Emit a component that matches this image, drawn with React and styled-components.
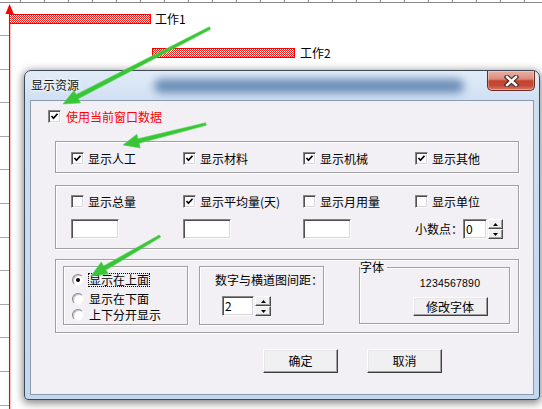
import React from 'react';
import styled, { createGlobalStyle } from 'styled-components';

const FONT = `"Noto Sans CJK SC", "Noto Sans", sans-serif`;

const GlobalStyle = createGlobalStyle`
  html, body { margin: 0; padding: 0; background: #fff; }
  body { font-family: ${FONT}; font-size: 12px; }
  * { box-sizing: border-box; }
`;

const Desktop = styled.div`
  position: relative;
  width: 542px;
  height: 409px;
  overflow: hidden;
  background: #fff;
  font-family: ${FONT};
  font-size: 12px;
  color: #000;
`;

const ChartLayer = styled.svg`
  position: absolute;
  left: 0;
  top: 0;
`;

const OverlayLayer = styled.svg`
  position: absolute;
  left: 0;
  top: 0;
  pointer-events: none;
  z-index: 5;
`;

const Window = styled.div`
  position: absolute;
  left: 24px;
  top: 70px;
  width: 516px;
  height: 330px;
  display: flex;
  flex-direction: column;
  padding: 0 5px 4px 5px;
  border: 1px solid #3e4856;
  border-radius: 7px 7px 4px 4px;
  background: linear-gradient(180deg, #e2ecf8 0px, #cfdff2 30px, #c3d7ee 100%);
  box-shadow: 0 2px 9px 1px rgba(0, 0, 0, 0.5);
`;

const TitleBar = styled.div`
  position: relative;
  height: 29px;
  flex: none;
  display: flex;
  align-items: flex-start;
  justify-content: space-between;

  &::before {
    content: '';
    position: absolute;
    left: 124px;
    right: 70px;
    top: 8px;
    height: 14px;
    border-radius: 7px;
    background: #5e83b0;
    filter: blur(4px);
    opacity: 0.9;
  }
`;

const Title = styled.div`
  position: relative;
  margin: 7px 0 0 1px;
  line-height: 14px;
  font-size: 12px;
  color: #101010;
  text-shadow: 0 0 5px #fff, 0 0 3px #fff;
`;

const CloseButton = styled.div`
  position: relative;
  width: 48px;
  height: 20px;
  margin-right: -1px;
  display: flex;
  align-items: center;
  justify-content: center;
  border: 1px solid #6b2a22;
  border-top: none;
  border-radius: 0 0 5px 5px;
  background: linear-gradient(180deg, #e9b0a6 0%, #dc8d7e 42%, #c3432f 52%, #c54a36 78%, #d9806c 100%);
  box-shadow: inset 0 0 0 1px rgba(255, 255, 255, 0.3);
`;

const Client = styled.div`
  flex: 1;
  display: flex;
  flex-direction: column;
  border: 1px solid #8a9bb0;
  background: #f2f0f4;
`;

const CheckItem = styled.div`
  display: flex;
  align-items: center;
  gap: ${p => p.$gap || 4}px;
  height: 13px;
  line-height: 13px;
  white-space: nowrap;
  color: ${p => (p.$red ? '#ff0000' : '#000')};
`;

const TopRow = styled.div`
  margin: 9px 0 0 17px;
`;

const Box = styled.span`
  width: 13px;
  height: 13px;
  flex: none;
  display: flex;
  align-items: center;
  justify-content: center;
  background: #fff;
  border: 1px solid;
  border-color: #858585 #fbfbfb #fbfbfb #858585;
  box-shadow: inset 1px 1px 0 #505050, inset -1px -1px 0 #d8d6da;
`;

const Group = styled.div`
  width: 464px;
  height: ${p => p.$h}px;
  margin: ${p => p.$mt}px 0 0 24px;
  border: 1px solid #a0a0a0;
  box-shadow: 1px 1px 0 #fff, inset 1px 1px 0 #fff;
  flex: none;
`;

const OptionGrid = styled.div`
  display: grid;
  grid-template-columns: 112px 120px 112px auto;
  row-gap: 11px;
  align-items: center;
  padding: ${p => p.$pt}px 0 0 15px;
`;

const Field = styled.div`
  width: ${p => p.$w}px;
  height: 20px;
  padding-left: 2px;
  line-height: 17px;
  font-size: 12px;
  background: #fff;
  border: 1px solid;
  border-color: #858585 #fbfbfb #fbfbfb #858585;
  box-shadow: inset 1px 1px 0 #505050, inset -1px -1px 0 #d8d6da;
`;

const SpinGroup = styled.div`
  display: flex;
  align-items: center;
`;

const SpinStack = styled.div`
  display: flex;
  flex-direction: column;
  width: ${p => p.$w}px;
  height: 20px;
  margin-left: 1px;
`;

const SpinBtn = styled.div`
  flex: 1;
  display: flex;
  align-items: center;
  justify-content: center;
  background: #f0eff2;
  border: 1px solid;
  border-color: #fff #4a4a4a #4a4a4a #fff;
  box-shadow: inset -1px -1px 0 #a0a0a0;
`;

const InlineLabel = styled.span`
  width: 48px;
  line-height: 14px;
  white-space: nowrap;
`;

const BottomRow = styled.div`
  display: flex;
  align-items: flex-start;
  padding: 6px 0 0 7px;
`;

const Etched = styled.div`
  width: ${p => p.$w}px;
  height: ${p => p.$h}px;
  margin: ${p => p.$mt || 0}px 0 0 ${p => p.$ml || 0}px;
  border: 1px solid #a0a0a0;
  box-shadow: 1px 1px 0 #fff, inset 1px 1px 0 #fff;
  flex: none;
`;

const RadioList = styled(Etched)`
  display: flex;
  flex-direction: column;
  padding-left: 8px;
`;

const RadioRow = styled.div`
  display: flex;
  align-items: center;
  gap: 4px;
  height: 13px;
  margin-top: ${p => p.$mt}px;
`;

const RadioDot = styled.span`
  width: 12px;
  height: 12px;
  flex: none;
  border-radius: 50%;
  background: #fff;
  border: 1px solid;
  border-color: #8a8a8a #f4f4f4 #f4f4f4 #8a8a8a;
  box-shadow: inset 1px 1px 0 #c4c4c4;
  display: flex;
  align-items: center;
  justify-content: center;

  &::after {
    content: '';
    display: ${p => (p.$on ? 'block' : 'none')};
    width: 4px;
    height: 4px;
    border-radius: 50%;
    background: #000;
  }
`;

const RadioText = styled.span`
  line-height: 12px;
  white-space: nowrap;
  border: 1px dotted ${p => (p.$focus ? '#000' : 'transparent')};
`;

const SpacingBox = styled(Etched)`
  display: flex;
  flex-direction: column;
  padding: 7px 0 0 15px;
`;

const SpacingLabel = styled.div`
  line-height: 12px;
  white-space: nowrap;
`;

const SpacingSpin = styled(SpinGroup)`
  margin: 10px 0 0 7px;
`;

const FontBox = styled(Etched)`
  position: relative;
  display: flex;
  flex-direction: column;
  align-items: center;
  padding: 9px 0 0 31px;
`;

const Legend = styled.span`
  position: absolute;
  left: 0;
  top: -7px;
  line-height: 12px;
  padding: 0 3px 0 0;
  background: #f2f0f4;
`;

const Sample = styled.div`
  line-height: 12px;
  font-family: "Liberation Sans", Arial, sans-serif;
  font-size: 10.5px;
  letter-spacing: 0.2px;
`;

const PushButton = styled.div`
  width: 75px;
  height: ${p => p.$h}px;
  margin-top: ${p => p.$mt || 0}px;
  display: flex;
  align-items: center;
  justify-content: center;
  line-height: 12px;
  background: #f0eff2;
  border: 1px solid;
  border-color: #fff #404040 #404040 #fff;
  box-shadow: inset -1px -1px 0 #a0a0a0, inset 1px 1px 0 #e6e6e6;
`;

const ButtonRow = styled.div`
  display: flex;
  gap: 29px;
  margin: 16px 0 0 232px;
`;

function Check({ on }) {
  return (
    <Box>
      {on && (
        <svg width="9" height="9" viewBox="0 0 9 9">
          <path d="M1.5 4 L3.5 6.2 L7.5 1.8" fill="none" stroke="#000" strokeWidth="1.7" />
        </svg>
      )}
    </Box>
  );
}

function CheckLabel({ on, children, red, gap }) {
  return (
    <CheckItem $red={red} $gap={gap}>
      <Check on={on} />
      <span>{children}</span>
    </CheckItem>
  );
}

function Tri({ down }) {
  return (
    <svg width="5" height="3" viewBox="0 0 5 3">
      <polygon points={down ? '0,0 5,0 2.5,3' : '0,3 5,3 2.5,0'} fill="#000" />
    </svg>
  );
}

function Spin({ value, inputW, btnW }) {
  return (
    <>
      <Field $w={inputW}>{value}</Field>
      <SpinStack $w={btnW}>
        <SpinBtn><Tri /></SpinBtn>
        <SpinBtn><Tri down /></SpinBtn>
      </SpinStack>
    </>
  );
}

function GanttChart() {
  const ticks = [];
  for (let x = 20; x < 542; x += 24) ticks.push(x + 0.5);
  const rows = [];
  for (let y = 35; y < 409; y += 33.6) rows.push(Math.round(y) + 0.5);
  return (
    <ChartLayer width="542" height="409" viewBox="0 0 542 409">
      <defs>
        <pattern id="hatch" width="2" height="2" patternUnits="userSpaceOnUse">
          <rect width="2" height="2" fill="#fff" />
          <rect width="1" height="1" fill="#ff1a1a" />
          <rect x="1" y="1" width="1" height="1" fill="#ff1a1a" />
        </pattern>
      </defs>
      <line x1="0" y1="2.5" x2="542" y2="2.5" stroke="#8a8a8a" />
      {ticks.map(x => (
        <line key={x} x1={x} y1="0" x2={x} y2="3" stroke="#8a8a8a" />
      ))}
      {rows.map(y => (
        <line key={y} x1="0" y1={y} x2="9" y2={y} stroke="#a8a8a8" />
      ))}
      <line x1="9.6" y1="12" x2="9.6" y2="409" stroke="#ff0000" strokeWidth="1.3" />
      <polygon points="9.6,4 13.8,14 5.4,14" fill="#ff0000" />
      <rect x="9.5" y="14.5" width="141" height="9" fill="url(#hatch)" stroke="#ff0000" />
      <rect x="152.5" y="48.5" width="142" height="9" fill="url(#hatch)" stroke="#ff0000" />
      <text x="155" y="24" fontSize="12" fontFamily={FONT} fill="#000">工作1</text>
      <text x="300" y="58" fontSize="12" fontFamily={FONT} fill="#000">工作2</text>
    </ChartLayer>
  );
}

function arrowPoints([x1, y1], [x2, y2], head = 16, hw = 7, tw = 1.3, sw = 2.3) {
  const dx = x2 - x1;
  const dy = y2 - y1;
  const L = Math.hypot(dx, dy);
  const ux = dx / L;
  const uy = dy / L;
  const px = -uy;
  const py = ux;
  const bx = x2 - ux * head;
  const by = y2 - uy * head;
  const pts = [
    [x1 + px * tw, y1 + py * tw],
    [bx + px * sw, by + py * sw],
    [bx + px * hw, by + py * hw],
    [x2, y2],
    [bx - px * hw, by - py * hw],
    [bx - px * sw, by - py * sw],
    [x1 - px * tw, y1 - py * tw],
  ];
  return pts.map(p => p.map(v => v.toFixed(1)).join(',')).join(' ');
}

function Arrows() {
  const arrows = [
    [[210, 28], [63, 104]],
    [[206, 124], [123, 145]],
    [[160, 236], [91, 276]],
  ];
  return (
    <OverlayLayer width="542" height="409" viewBox="0 0 542 409">
      {arrows.map(([a, b], i) => (
        <polygon key={i} points={arrowPoints(a, b)} fill="#38c638" stroke="#55d455" strokeWidth="0.6" strokeLinejoin="round" />
      ))}
    </OverlayLayer>
  );
}

export default function App() {
  return (
    <Desktop>
      <GlobalStyle />
      <GanttChart />
      <Window>
        <TitleBar>
          <Title>显示资源</Title>
          <CloseButton>
            <svg width="17" height="12" viewBox="0 0 17 12">
              <path d="M4 2 L13 10 M13 2 L4 10" stroke="#4a2622" strokeWidth="4.6" strokeLinecap="square" />
              <path d="M4 2 L13 10 M13 2 L4 10" stroke="#fff" strokeWidth="2.4" strokeLinecap="square" />
            </svg>
          </CloseButton>
        </TitleBar>
        <Client>
          <TopRow>
            <CheckLabel on red gap={5}>使用当前窗口数据</CheckLabel>
          </TopRow>
          <Group $h={32} $mt={18}>
            <OptionGrid $pt={10}>
              <CheckLabel on>显示人工</CheckLabel>
              <CheckLabel on>显示材料</CheckLabel>
              <CheckLabel on>显示机械</CheckLabel>
              <CheckLabel on>显示其他</CheckLabel>
            </OptionGrid>
          </Group>
          <Group $h={64} $mt={12}>
            <OptionGrid $pt={9}>
              <CheckLabel>显示总量</CheckLabel>
              <CheckLabel on>显示平均量(天)</CheckLabel>
              <CheckLabel>显示月用量</CheckLabel>
              <CheckLabel>显示单位</CheckLabel>
              <Field $w={48} />
              <Field $w={48} />
              <Field $w={48} />
              <SpinGroup>
                <InlineLabel>小数点：</InlineLabel>
                <Spin value="0" inputW={24} btnW={15} />
              </SpinGroup>
            </OptionGrid>
          </Group>
          <Group $h={74} $mt={10}>
            <BottomRow>
              <RadioList $w={125} $h={59}>
                <RadioRow $mt={6}>
                  <RadioDot $on />
                  <RadioText $focus>显示在上面</RadioText>
                </RadioRow>
                <RadioRow $mt={6}>
                  <RadioDot />
                  <RadioText>显示在下面</RadioText>
                </RadioRow>
                <RadioRow $mt={3}>
                  <RadioDot />
                  <RadioText>上下分开显示</RadioText>
                </RadioRow>
              </RadioList>
              <SpacingBox $w={125} $h={59} $ml={11}>
                <SpacingLabel>数字与横道图间距：</SpacingLabel>
                <SpacingSpin>
                  <Spin value="2" inputW={32} btnW={16} />
                </SpacingSpin>
              </SpacingBox>
              <FontBox $w={151} $h={57} $ml={35} $mt={1}>
                <Legend>字体</Legend>
                <Sample>1234567890</Sample>
                <PushButton $h={19} $mt={8}>修改字体</PushButton>
              </FontBox>
            </BottomRow>
          </Group>
          <ButtonRow>
            <PushButton $h={24}>确定</PushButton>
            <PushButton $h={24}>取消</PushButton>
          </ButtonRow>
        </Client>
      </Window>
      <Arrows />
    </Desktop>
  );
}
